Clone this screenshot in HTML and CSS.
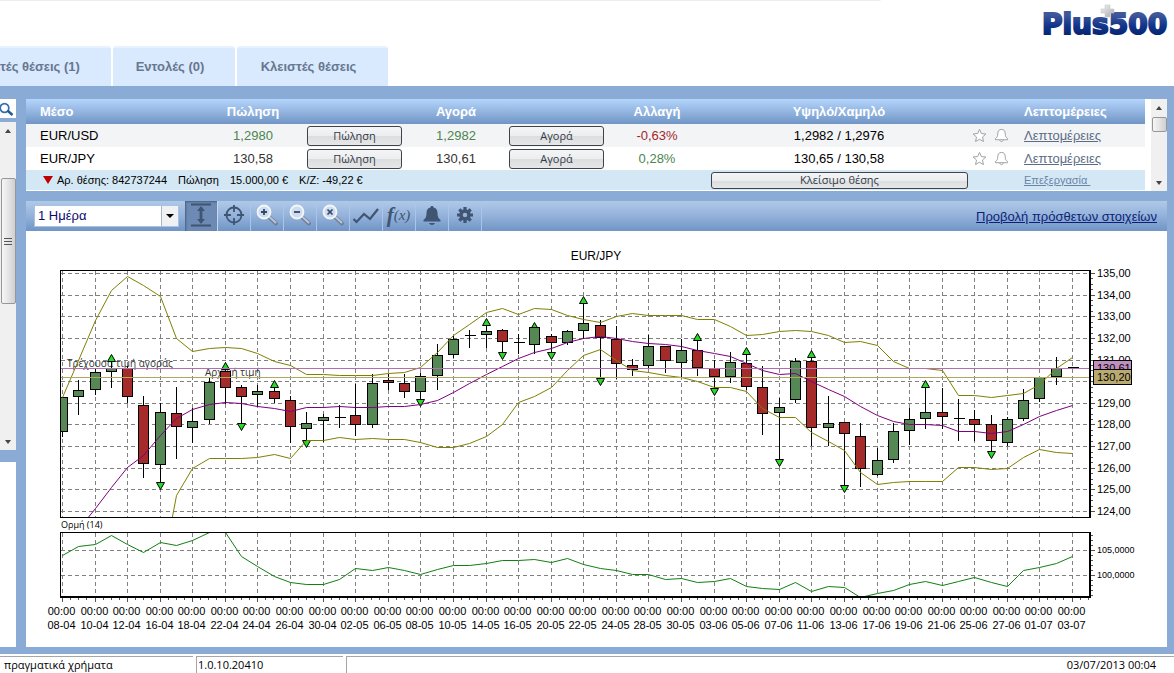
FILE: index.html
```html
<!DOCTYPE html>
<html lang="el">
<head>
<meta charset="utf-8">
<title>Plus500</title>
<link rel="stylesheet" href="styles.css">
</head>
<body>
<svg class="defs" width="0" height="0" aria-hidden="true">
  <symbol id="star" viewBox="0 0 16 16"><path d="M8 1.500l2 4.400 4.800.5-3.600 3.200 1 4.800L8 12l-4.200 2.400 1-4.800L1.200 6.400 6 5.900z"/></symbol>
  <symbol id="bell" viewBox="0 0 16 16"><path d="M8 1.500c-2.600 0-4 1.900-4 4.500 0 3-.7 4-2.500 5.200v1.300h13v-1.300C12.700 10 12 9 12 6c0-2.600-1.400-4.500-4-4.500zM6.200 12.800c.2 1.200.9 1.700 1.800 1.700s1.600-.5 1.800-1.700"/></symbol>
  <symbol id="lens" viewBox="0 0 24 24"><path d="M14 14l7 6.500" stroke="#6d7f99" stroke-width="4" stroke-linecap="round"/><path d="M14 13.500l6.500 6" stroke="#b9c6d8" stroke-width="2" stroke-linecap="round"/><circle cx="9" cy="9" r="6.500" fill="#cfdcec" stroke="#f2f6fa" stroke-width="1.800"/></symbol>
</svg>

<header class="top">
  <nav class="tabs">
    <button class="tab tab-open">τές θέσεις (1)</button>
    <button class="tab">Εντολές (0)</button>
    <button class="tab tab-closed">Κλειστές θέσεις</button>
  </nav>
  <svg class="logo" viewBox="0 0 132 36" role="img" aria-label="Plus500">
    <defs>
      <linearGradient id="ink" x1="0" y1="0" x2="0" y2="1"><stop offset=".2" stop-color="#40589a"/><stop offset=".55" stop-color="#10348a"/><stop offset=".85" stop-color="#06246f"/></linearGradient>
      <linearGradient id="silver" x1="0" y1="0" x2="1" y2="1"><stop offset="0" stop-color="#f4f4f4"/><stop offset="1" stop-color="#a5a8ac"/></linearGradient>
    </defs>
    <text class="logo-text" x="1" y="30" fill="url(#ink)" stroke="url(#ink)">Plus500</text>
    <path d="M64 1h5v4h4v4h-4v4h-5V9h-4V5h4z" fill="url(#silver)" stroke="#c8cacc" stroke-width=".6"/>
  </svg>
</header>

<div class="workspace">
  <aside class="sidebar">
    <button class="search" aria-label="Αναζήτηση"><svg viewBox="0 0 16 18"><circle cx="4.500" cy="8" r="4.300" fill="none" stroke="#2f6fb0" stroke-width="1.700"/><path d="M7.500 10.500l5 4.500" stroke="#1f5a98" stroke-width="2.400"/></svg></button>
    <div class="scroll scroll-side">
      <span class="arrow arrow-up"></span>
      <span class="thumb thumb-side"><i></i><i></i><i></i></span>
      <span class="arrow arrow-down"></span>
    </div>
    <div class="side-rest"></div>
  </aside>

  <main class="main">
    <section class="quotes">
      <table class="grid">
        <colgroup><col><col class="c-sell"><col class="c-btn"><col class="c-buy"><col class="c-btn"><col class="c-chg"><col class="c-hl"><col class="c-icons"><col class="c-det"></colgroup>
        <thead>
          <tr><th class="left">Μέσο</th><th>Πώληση</th><th></th><th>Αγορά</th><th></th><th>Αλλαγή</th><th>Υψηλό/Χαμηλό</th><th></th><th class="det">Λεπτομέρειες</th></tr>
        </thead>
        <tbody>
          <tr class="odd">
            <td class="left">EUR/USD</td><td class="up">1,2980</td><td><button class="btn">Πώληση</button></td>
            <td class="up">1,2982</td><td><button class="btn">Αγορά</button></td><td class="down">-0,63%</td><td>1,2982 / 1,2976</td>
            <td><span class="marks"><svg><use href="#star"/></svg><svg><use href="#bell"/></svg></span></td><td class="det"><a href="#">Λεπτομέρειες</a></td>
          </tr>
          <tr>
            <td class="left">EUR/JPY</td><td class="flat">130,58</td><td><button class="btn">Πώληση</button></td>
            <td class="flat">130,61</td><td><button class="btn">Αγορά</button></td><td class="up">0,28%</td><td>130,65 / 130,58</td>
            <td><span class="marks"><svg><use href="#star"/></svg><svg><use href="#bell"/></svg></span></td><td class="det"><a href="#">Λεπτομέρειες</a></td>
          </tr>
          <tr class="position">
            <td colspan="6"><div class="pos"><span class="fall"></span><span>Αρ. θέσης: 842737244</span><span>Πώληση</span><span>15.000,00 €</span><span>Κ/Ζ: -49,22 €</span></div></td>
            <td><button class="btn btn-close">Κλείσιμο θέσης</button></td><td></td><td class="det"><a href="#">Επεξεργασία&nbsp;</a></td>
          </tr>
        </tbody>
      </table>
      <div class="scroll">
        <span class="arrow arrow-up"></span><span class="thumb thumb-top"></span><span class="arrow arrow-down"></span>
      </div>
    </section>

    <div class="toolbar">
      <div class="period">
        <select aria-label="Περίοδος"><option>1 Ημέρα</option></select>
        <span class="drop"></span>
      </div>
      <div class="tools">
        <button class="tool pressed" aria-label="Ύψος"><svg viewBox="0 0 24 24"><path d="M2 1.500h20M2 22.500h20" stroke="#3f5573" stroke-width="1.800"/><path d="M12 6v12" stroke="#3f5573" stroke-width="2.800"/><path d="M12 3l4 5H8zM12 21l4-5H8z" fill="#3f5573"/></svg></button>
        <button class="tool" aria-label="Στόχος"><svg viewBox="0 0 24 24" fill="none" stroke="#3f5573" stroke-width="1.800"><circle cx="12" cy="12" r="7.500"/><path d="M12 2v7M12 15v7M2 12h7M15 12h7"/></svg></button>
        <button class="tool" aria-label="Μεγέθυνση"><svg viewBox="0 0 24 24"><use href="#lens"/><path d="M6 9h6M9 6v6" stroke="#2f486c" stroke-width="1.800"/></svg></button>
        <button class="tool" aria-label="Σμίκρυνση"><svg viewBox="0 0 24 24"><use href="#lens"/><path d="M6 9h6" stroke="#2f486c" stroke-width="1.800"/></svg></button>
        <button class="tool" aria-label="Επαναφορά"><svg viewBox="0 0 24 24"><use href="#lens"/><path d="M6.500 6.500l5 5M11.500 6.500l-5 5" stroke="#2f486c" stroke-width="1.700"/></svg></button>
        <button class="tool" aria-label="Γραμμή"><svg class="wide" viewBox="0 0 28 24"><path d="M1.500 16l3 3 7.500-8 6 5 8-10" fill="none" stroke="#3f5573" stroke-width="2.200"/></svg></button>
        <button class="tool fx" aria-label="Συνάρτηση"><b>f</b><i>(x)</i></button>
        <button class="tool" aria-label="Ειδοποίηση"><svg viewBox="0 0 24 24" fill="#3f5573"><path d="M12 3c-1 0-1.600.6-1.600 1.500C7.500 5.200 6.500 7.500 6.500 10c0 4-1 5.500-3 7v1.500h17V17c-2-1.500-3-3-3-7 0-2.500-1-4.800-3.900-5.500C13.600 3.600 13 3 12 3zM9 20h6c-.6 1.300-1.600 2-3 2s-2.400-.7-3-2z"/></svg></button>
        <button class="tool" aria-label="Ρυθμίσεις"><svg viewBox="0 0 24 24" fill="none" stroke="#3f5573"><circle cx="12" cy="12" r="4" stroke-width="3.500"/><path d="M12 4v3M12 17v3M4 12h3M17 12h3M6.300 6.300l2.200 2.200M15.500 15.500l2.200 2.200M6.300 17.700l2.200-2.200M15.500 8.500l2.200-2.200" stroke-width="3.200"/></svg></button>
      </div>
      <a class="more" href="#">Προβολή πρόσθετων στοιχείων</a>
    </div>

    <section class="chart">
      <svg id="chart" viewBox="26 231 1141 416" role="img" aria-label="EUR/JPY"></svg>
    </section>
  </main>
</div>

<footer class="status">
  <span class="cell cell-mode">πραγματικά χρήματα</span>
  <span class="cell cell-version">1.0.10.20410</span>
  <span class="cell cell-time">03/07/2013 00:04</span>
</footer>
<script src="chart.js"></script>
</body>
</html>
```
FILE: styles.css
```css
* { box-sizing: border-box; }
body {
  margin: 0;
  min-height: 100vh;
  display: flex;
  flex-direction: column;
  background: #fff;
  font-family: "Liberation Sans", Arial, sans-serif;
  font-size: 13px;
  color: #000;
}
button { font-family: inherit; margin: 0; cursor: pointer; }
.defs { display: block; position: absolute; }

.top {
  height: 86px;
  display: flex;
  justify-content: space-between;
  background: linear-gradient(#ededed, #ededed) no-repeat 0 0 / 75% 1px;
}
.tabs { display: flex; align-items: flex-end; gap: 2px; }
.tab {
  width: 122px;
  height: 40px;
  border: 0;
  border-top: 2px solid #e8f2fe;
  border-radius: 3px 3px 0 0;
  background: #d9e9fe;
  color: #66778f;
  font-size: 13px;
  font-weight: bold;
  padding: 0 8px 2px 0;
  text-align: center;
}
.tab-open { width: 111px; text-align: left; border-radius: 0 3px 0 0; }
.tab-closed { width: 151px; }
.logo { width: 132px; height: 36px; margin: 4px 1px 0 0; }
.logo-text { font: bold 28px "DejaVu Sans", sans-serif; stroke-width: 2; }

.workspace {
  flex: 1;
  display: flex;
  gap: 10px;
  padding: 13px 7px 7px 0;
  background: #8aabd6;
}
.sidebar { width: 16px; display: flex; flex-direction: column; }
.search { height: 19px; width: 16px; padding: 0; border: 0; background: #fff; margin-bottom: 4px; }
.search svg { display: block; width: 16px; height: 18px; }
.scroll {
  width: 16px;
  display: flex;
  flex-direction: column;
  align-items: center;
  background: #f0f0f0;
}
.scroll-side { height: 328px; }
.side-rest { flex: 1; margin-top: 12px; background: #fff; }
.arrow { width: 0; height: 0; border: 3px solid transparent; flex: none; }
.arrow-up { border-bottom: 4px solid #444; border-top: 0; margin: 7px 0; }
.arrow-down { border-top: 4px solid #444; border-bottom: 0; margin: auto 0 6px; }
.thumb {
  width: 15px;
  border: 1px solid #979797;
  border-radius: 2px;
  background: linear-gradient(90deg, #f6f6f6, #e6e6e8 45%, #cfcfd2);
  display: flex;
  flex-direction: column;
  align-items: center;
  justify-content: center;
  gap: 2px;
}
.thumb-side { height: 126px; margin-top: 38px; }
.thumb-side i { width: 8px; height: 1px; background: #555; }
.thumb-top { height: 15px; }

.main { flex: 1; min-width: 0; display: flex; flex-direction: column; }
.quotes { display: flex; background: #fff; margin-bottom: 10px; }
.quotes .scroll { margin-left: 6px; }
.grid { flex: 1; table-layout: fixed; border-collapse: separate; border-spacing: 0; min-width: 0; width: 100%; }
.c-sell { width: 106px; }
.c-btn { width: 98px; }
.c-buy { width: 104px; }
.c-chg { width: 102px; }
.c-hl { width: 262px; }
.c-icons { width: 46px; }
.c-det { width: 129px; }
.grid th, .grid td { padding: 0; text-align: center; white-space: nowrap; }
.grid th { height: 25px; color: #fff; font-size: 13px; }
.grid thead tr { background: linear-gradient(#b4d5fc, #93b5e0 50%, #7095c5); }
.grid td { height: 23px; font-size: 13px; }
.grid .left { text-align: left; padding-left: 14px; }
.grid .det { text-align: left; padding-left: 8px; }
.odd { background: #f3f4f5; }
.grid .up { color: #4c8550; }
.grid .down { color: #a3242d; }
.grid .flat { color: #333; }
.det a { color: #5c6c86; font-size: 13px; }
.grid .position td { height: 21px; font-size: 11px; background: #d3e8f4; border-bottom: 1px solid #fff; }
.grid .position a { font-size: 11px; color: #6c86a8; }
.pos { display: flex; align-items: center; gap: 11px; padding-left: 17px; }
.fall { border: 5px solid transparent; border-top: 8px solid #c00000; border-bottom: 0; margin-right: -7px; }
.btn {
  display: block;
  width: 95px;
  height: 20px;
  margin: 0 1px;
  padding: 0;
  border: 1px solid #3f434b;
  border-radius: 3px;
  background: linear-gradient(#f4f5f6, #ecedee 50%, #dcdddf 52%, #e6e7e9);
  color: #333a45;
  font: 11px "Open Sans", sans-serif;
  line-height: 16px;
}
.btn-close { width: 257px; height: 17px; line-height: 14px; margin: 0 3px; }
.marks { display: flex; padding-left: 2px; gap: 7px; }
.marks svg { width: 15px; height: 15px; fill: #fff; stroke: #9b9b9b; stroke-width: 1; }

.toolbar {
  height: 30px;
  display: flex;
  align-items: center;
  padding: 0 10px 0 8px;
  background: linear-gradient(#b0c9e8, #93b1da 50%, #7195c6);
}
.period { position: relative; width: 145px; height: 22px; margin-right: 6px; }
.period select {
  appearance: none;
  width: 100%;
  height: 100%;
  border: 1px solid #a9c2e2;
  border-radius: 0;
  background: #fff;
  color: #0a0a6e;
  font: 13px "Liberation Sans", sans-serif;
  padding: 0 20px 2px 3px;
}
.drop {
  position: absolute;
  top: 1px;
  right: 1px;
  bottom: 1px;
  width: 17px;
  border-left: 1px solid #a9b6c6;
  background: #f0f1f3;
  display: flex;
  align-items: center;
  justify-content: center;
  pointer-events: none;
}
.drop::after { content: ""; border: 4px solid transparent; border-top-color: #000; border-bottom: 0; }
.tools { display: flex; align-self: stretch; }
.tool {
  width: 33px;
  padding: 0 1px 2px 0;
  border: 0;
  border-right: 1px solid #a9c5ea;
  background: none;
  display: flex;
  align-items: center;
  justify-content: center;
  color: #3f5573;
}
.tool svg { width: 24px; height: 24px; }
.tool .wide { width: 28px; }
.pressed { background: #6c8ab4; border-right-color: #c4d8f0; box-shadow: inset 1px 1px 2px #47617f; }
.fx { font-family: "Liberation Serif", serif; font-style: italic; }
.fx b { font-size: 21px; }
.fx i { font-size: 15px; }
.more { margin-left: auto; color: #0d1f78; font-size: 13px; }

.chart { flex: 1; background: #fff; }
.chart svg { display: block; width: 100%; height: auto; }
.chart text { font-family: "Liberation Sans", Arial, sans-serif; font-size: 11px; }
.chart .title { font-size: 12px; }
.chart .small { font-size: 9px; }
.chart .study { font: 9px "Open Sans", sans-serif; }
.chart .note { font: 10px "Open Sans", sans-serif; fill: #333; }
.mid { text-anchor: middle; }
.guide { stroke: #808080; stroke-dasharray: 4 3; shape-rendering: crispEdges; }
.tick { stroke: #555; shape-rendering: crispEdges; }
.frame { fill: none; stroke: #000; shape-rendering: crispEdges; }
.edge { stroke: #000; stroke-width: 2; shape-rendering: crispEdges; }
.wick { stroke: #000; shape-rendering: crispEdges; }
.rise { fill: #558855; stroke: #000; shape-rendering: crispEdges; }
.drops { fill: #a52a2a; stroke: #000; shape-rendering: crispEdges; }
.fractal { fill: #22dd22; stroke: #000; stroke-width: 1; }
.line { fill: none; stroke-width: 1; }
.band { stroke: #808000; }
.mean { stroke: #800080; }
.momentum { stroke: #118011; }
.ask { stroke: #b070b0; shape-rendering: crispEdges; }
.entry { stroke: #b0a860; shape-rendering: crispEdges; }
.tag { stroke: #000; shape-rendering: crispEdges; }
.tag-ask { fill: #bf8fbf; }
.tag-entry { fill: #b8aa70; }

.status {
  height: 19px;
  display: flex;
  gap: 3px;
  padding-top: 2px;
  font: 11px "Open Sans", sans-serif;
  line-height: 16px;
}
.cell { border-top: 1px solid #a6a6a6; border-left: 1px solid #a6a6a6; }
.cell-mode { width: 193px; padding-left: 4px; border-left: 0; }
.cell-version { width: 147px; padding-left: 1px; }
.cell-time { flex: 1; text-align: right; padding-right: 18px; }
```
FILE: chart.js
```js
// Each candle: colour, high, body top, body bottom, low, optional fractal (u/d) and its top edge.
const candles = `g 397 397 431 436|g 380 390 396 414|g 369 372 389 394|g 361 368 371 387 u 354|r 366 368 396 402
r 396 405 463 477|g 403 412 464 482 d 482|r 387 413 426 458|g 408 421 427 442|g 378 382 419 423
r 370 371 387 403 u 362|r 385 387 396 423 d 423|g 385 391 394 406|r 387 391 398 402 u 380|r 396 400 426 442
g 412 423 428 440 d 440|g 414 417 420 441|x 405 417 417 427|r 384 415 424 435|g 374 383 424 427
r 374 380 382 389|r 374 383 391 397|g 373 376 391 399 d 399|g 344 355 375 389|g 336 339 354 357
x 330 335 335 347|g 326 331 334 347 u 318|r 329 330 341 352 d 352|x 334 342 342 353|g 327 327 344 353 u 322
r 334 336 342 352 d 352|g 330 331 342 344|g 303 323 330 338 u 296|r 320 325 337 378 d 378|r 326 339 363 378
r 359 365 369 375|g 335 346 365 367|r 346 346 360 372|g 339 350 362 376|r 340 350 367 375 u 333
r 360 368 376 388 d 388|g 352 362 376 382|r 354 363 386 389 u 347|r 366 387 413 434|g 398 407 412 459 d 459
g 358 361 399 402|r 358 361 427 445 u 350|g 396 423 427 445|r 422 422 433 485 d 485|r 423 436 468 486
g 448 460 474 475|g 423 431 459 462|g 408 419 430 444|g 387 412 418 428 u 380|r 388 412 416 428
x 399 418 418 440|r 410 419 424 440|r 415 424 440 451 d 451|g 417 419 442 445|g 389 400 418 420
g 377 377 398 401|g 357 368 376 384|x 367 367 367 367`.split(/[|\n]/).map(s => s.split(" "));

const upper = "397 360 320 290 276 285 296 338 351 348 347 348 353 361 365 374 374 375 375 375 373 372 367 352 335 324 312 308 314 308 309 315 319 322 316 313 315 315 315 319 319 326 335 334 331 330 331 335 342 341 345 361 368 368 370 395 395 397 395 393 384 368 357";
const mean = "550 529 508 487 467 455 435 418 409 404 402 403 406 408 411 407 407 406 407 407 406 406 404 400 392 383 374 366 358 352 348 342 338 336 338 341 343 344 346 350 353 356 363 370 374 373 381 389 396 406 415 421 424 424 425 431 431 433 431 424 416 410 405";
const lower = "700 700 700 700 700 640 580 495 468 458 458 458 457 454 458 440 440 437 439 438 439 439 442 447 447 443 436 424 402 396 387 370 355 349 360 370 372 375 377 381 387 387 391 408 417 417 432 441 450 472 484 482 481 481 481 467 467 469 468 457 449 452 453";
const momentum = "555 546 544 535 544 552 542 545 540 532 532 556 566 576 582 584 584 579 568 570 567 570 574 569 565 565 563 560 560 559 562 558 564 568 570 574 574 579 578 582 581 578 586 588 589 582 591 586 587 597 593 590 584 581 585 581 577 582 586 570 567 563 556";
const dates = "08-04 10-04 12-04 16-04 18-04 22-04 24-04 26-04 30-04 02-05 06-05 08-05 10-05 14-05 16-05 20-05 22-05 24-05 28-05 30-05 03-06 05-06 07-06 11-06 13-06 17-06 19-06 21-06 25-06 27-06 01-07 03-07".split(" ");

const xAt = i => Math.round(62 + i * 16.29) + 0.5;
const yAt = price => Math.round(273 + (135 - price) * 21.64) + 0.5;
const out = [];
const line = (c, x1, y1, x2, y2) => out.push(`<line class="${c}" x1="${x1}" y1="${y1}" x2="${x2}" y2="${y2}"/>`);
const text = (c, x, y, s) => out.push(`<text class="${c}" x="${x}" y="${y}">${s}</text>`);
const rect = (c, x, y, w, h) => out.push(`<rect class="${c}" x="${x}" y="${y}" width="${w}" height="${h}"/>`);
const curve = (c, data) => out.push(`<polyline class="line ${c}" points="${data.split(" ").map((y, i) => xAt(i) + "," + (+y + 0.5)).join(" ")}"/>`);

out.push('<clipPath id="price"><rect x="61" y="271" width="1028" height="246"/></clipPath>');
out.push('<clipPath id="study"><rect x="61" y="532" width="1028" height="65"/></clipPath>');
text("title mid", 596, 260, "EUR/JPY");

for (let p = 135; p >= 124; p--) {
  line("guide", 61, yAt(p), 1089, yAt(p));
  line("tick", 1090, yAt(p), 1095, yAt(p));
  // The entry-price tag stands in the place of the 130,00 label.
  if (p !== 130) text("", 1097, yAt(p) + 3.5, p + ",00");
  if (p > 124) for (let q = 1; q < 4; q++) line("tick", 1090, yAt(p - q / 4), 1093, yAt(p - q / 4));
}
dates.forEach((d, k) => {
  const x = xAt(2 * k);
  line("guide", x, 271, x, 517);
  line("guide", x, 533, x, 596);
  line("tick", x, 598, x, 602);
  for (let q = 1; q < 4; q++) if (x + q * 8 < 1090) line("tick", x + q * 8, 598, x + q * 8, 600);
  text("mid", x - 1, 615, "00:00");
  text("mid", x - 1, 629, d);
});
[[550.5, "105,0000"], [575.5, "100,0000"]].forEach(([y, s]) => {
  line("guide", 61, y, 1089, y);
  line("tick", 1090, y, 1095, y);
  text("small", 1097, y + 2.5, s);
});
for (let y = 535.5; y < 596; y += 5) line("tick", 1090, y, 1093, y);

out.push('<g clip-path="url(#price)">');
text("note", 67, 367, "Τρέχουσα τιμή αγοράς");
text("note", 205, 376, "Αρχική τιμή");
candles.forEach(([kind, hi, top, bottom, lo, mark, at], i) => {
  const x = xAt(i);
  line("wick", x, hi, x, +lo + 1);
  if (mark === "u") out.push(`<path class="fractal" d="M${x} ${+at + 0.5}l4 7h-8z"/>`);
  if (mark === "d") out.push(`<path class="fractal" d="M${x} ${+at + 7.5}l4-7h-8z"/>`);
  if (kind === "x") line("wick", x - 5, +top + 0.5, x + 6, +top + 0.5);
  else rect(kind === "g" ? "rise" : "drops", x - 5, +top + 0.5, 10, bottom - top);
});
curve("band", upper);
curve("mean", mean);
curve("band", lower);
rect("ask", 61, 368.5, 1028, 0);
rect("entry", 61, 377.5, 1028, 0);
out.push('</g><g clip-path="url(#study)">');
curve("momentum", momentum);
out.push("</g>");
line("ask", 61, 368.5, 1089, 368.5);
line("entry", 61, 377.5, 1089, 377.5);

rect("frame", 60.5, 270.5, 1029, 247);
line("edge", 1090, 270, 1090, 518);
rect("frame", 60.5, 532.5, 1029, 64);
line("edge", 1090, 532, 1090, 598);
line("edge", 60, 597, 1091, 597);
text("study", 61, 528, "Ορμή (14)");

rect("tag tag-ask", 1093.5, 360.5, 38, 15);
text("", 1097, 372, "130,61");
rect("tag tag-entry", 1093.5, 369.5, 38, 15);
text("", 1097, 381, "130,20");

document.getElementById("chart").innerHTML = out.join("");
```
